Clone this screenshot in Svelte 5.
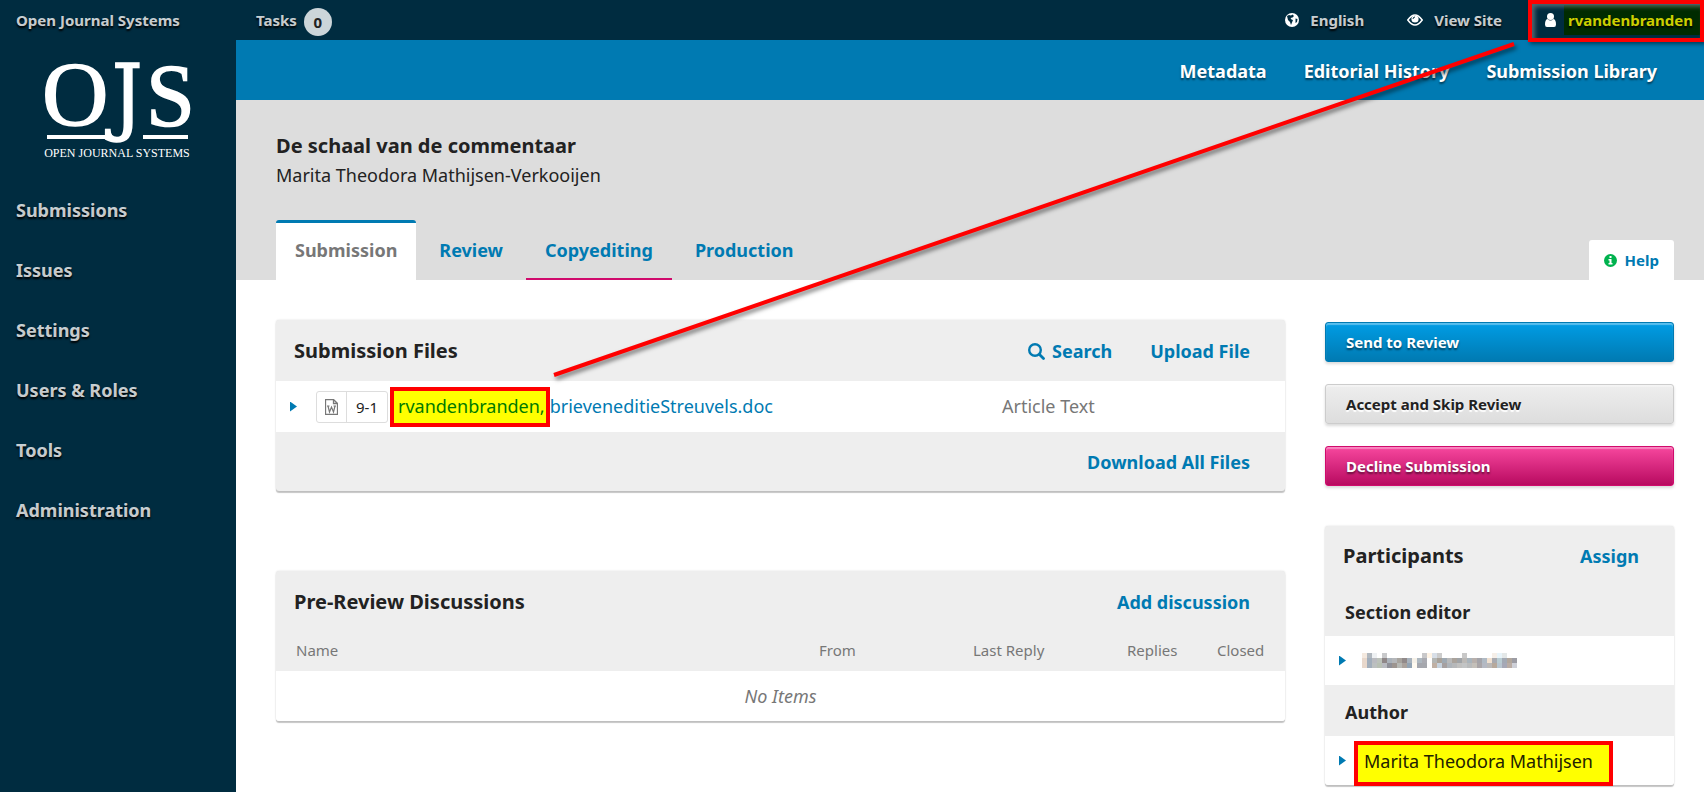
<script lang="ts">
  const navItems = ["Submissions", "Issues", "Settings", "Users & Roles", "Tools", "Administration"];
  const actions = ["Metadata", "Editorial History", "Submission Library"];

  const tabs = [
    { label: "Submission", state: "active" },
    { label: "Review", state: "" },
    { label: "Copyediting", state: "initiated" },
    { label: "Production", state: "" },
  ];

  const decisions = [
    { label: "Send to Review", kind: "primary" },
    { label: "Accept and Skip Review", kind: "plain" },
    { label: "Decline Submission", kind: "warn" },
  ];

  const columns = ["Name", "From", "Last Reply", "Replies", "Closed"];

  // cell colours of the redacted name
  const mosaic = [
    "f4e9df b1b8bf eef1f3 ffffff c8c9cb ffffff ffffff ffffff ffffff ffffff ffffff ffffff c8c8ca fff4e6 d8dfe8 cccccc ffffff ffffff ffffff ffffff c8c8c8 ffffff ffffff ffffff ffffff ffffff f6efe8 e8f4fa e4e8e8 ffffff ffffff",
    "e8d8cc a2aebb babbc0 bcc2bb 8f8788 aab2ba b5b7ba a8a49e 918a8a a8b2bc f6f1e8 aeb8c0 aaabb2 ffffff b4b6b4 a9a29a 9fa9b2 b9b9b9 aaa39c a0a4a8 bcb9b6 a9b4bc b8b0ac a4a4aa b0bac4 f0e0d0 a9aab0 b9ccd2 a2a9b4 b0a69c 9c9ca4",
    "e8d8cc a2aebb bcc0c0 b8c0b4 b8bac0 8f9098 9d9590 b6b8b4 aaa29c 93a4b4 fffaf0 a5a7ae a6a8ae ffffff c0b0a4 c6d2de a6a0a0 aeb4ba b6b8ba c0c0bf c2c4c5 b9bbbc c4c0ba a9a5a8 b5b9c3 bbb9b8 b7a99c b8c6d0 a6a8b6 b9aca4 ced0d8",
  ].map((row) => row.split(" "));
</script>

<div class="app">
  <aside class="sidebar">
    <a class="context" href="#context">Open Journal Systems</a>
    <a class="logo" href="#home" aria-label="Open Journal Systems">
      <svg width="148" height="104" viewBox="0 0 148 104" fill="#fff">
        <g stroke="#fff" stroke-width="1.500">
          <text class="serif" x="0" y="66" font-size="92">O</text>
          <text class="condensed" x="70" y="65" font-size="84">J</text>
          <text class="serif" x="104" y="66" font-size="88">S</text>
        </g>
        <rect x="5" y="76" width="65" height="4" />
        <rect x="101" y="76" width="45" height="4" />
        <text class="serif" x="75" y="98" font-size="12" text-anchor="middle">OPEN JOURNAL SYSTEMS</text>
      </svg>
    </a>
    <nav class="nav">
      {#each navItems as item}
        <a href="#nav">{item}</a>
      {/each}
    </nav>
  </aside>

  <div class="main">
    <header class="topbar">
      <a class="tasks" href="#tasks">Tasks <span class="count">0</span></a>
      <div class="user-nav">
        <a href="#language">
          <svg width="14" height="14" viewBox="0 0 14 14">
            <circle cx="7" cy="7" r="7" fill="#fff" />
            <path d="M2 3 4 2l2 .5L7.500 1.500 9 3 7.500 4.500 5.500 5 6.500 6.500 8 7 7 9.500 6 12 5 9 3 7ZM10.500 5.500l2 .5-.5 3-1.500 1Z" fill="#002c40" />
          </svg>
          English
        </a>
        <a href="#site">
          <svg width="16" height="12" viewBox="0 0 16 12">
            <path d="M.8 6Q8-4 15.200 6 8 16 .8 6Z" fill="none" stroke="#fff" stroke-width="1.500" />
            <circle cx="8" cy="5" r="3.600" fill="#fff" />
            <path d="M6 5a2 2 0 0 1 2-2" fill="none" stroke="#002c40" />
          </svg>
          View Site
        </a>
        <a class="user" href="#profile">
          <svg width="11" height="14" viewBox="0 0 11 14" fill="#fff">
            <circle cx="5.500" cy="3.500" r="3.500" />
            <path d="M2.500 6Q0 6.500 0 11.500 0 14 2 14h7q2 0 2-2.500Q11 6.500 8.500 6 5.500 9 2.500 6Z" />
          </svg>
          <span class="marked">rvandenbranden</span>
        </a>
      </div>
    </header>

    <div class="actions">
      {#each actions as action}
        <a href="#action">{action}</a>
      {/each}
    </div>

    <section class="heading">
      <h1>De schaal van de commentaar</h1>
      <div class="author">Marita Theodora Mathijsen-Verkooijen</div>
      <div class="tab-row">
        <nav class="tabs">
          {#each tabs as tab}
            <a class={tab.state} href="#stage">{tab.label}</a>
          {/each}
        </nav>
        <a class="help" href="#help">
          <svg width="13" height="13" viewBox="0 0 13 13">
            <circle cx="6.500" cy="6.500" r="6.500" fill="#00b24e" />
            <path d="M5.500 2h2v2h-2ZM4.500 5h3v4h1v1.500h-4V9h1V6.500h-1Z" fill="#fff" />
          </svg>
          Help
        </a>
      </div>
    </section>

    <main class="content">
      <div class="column">
        <section class="panel">
          <div class="panel-head">
            <h2>Submission Files</h2>
            <div class="panel-actions">
              <button type="button">
                <svg width="17" height="17" viewBox="0 0 17 17" fill="none" stroke="#007ab2">
                  <circle cx="7" cy="7" r="5.800" stroke-width="2.400" />
                  <path d="m11.500 11.500 4 4" stroke-width="2.800" stroke-linecap="round" />
                </svg>
                Search
              </button>
              <button type="button">Upload File</button>
            </div>
          </div>
          <div class="file">
            <button class="toggle" type="button" aria-label="Settings"></button>
            <span class="badge">
              <span class="type">
                <svg width="13" height="16" viewBox="0 0 13 16" fill="none" stroke="#777">
                  <path d="M.5.5h8l4 4v11H.5ZM8.500.5v4h4" stroke-width="1.300" />
                  <path d="m3 7 1.500 6L6.500 8l2 5L10 7M2 7h2.500M8.500 7H11" stroke-width="1.200" />
                </svg>
              </span>
              <span class="id">9-1</span>
            </span>
            <a class="file-name" href="#file"><span class="boxed">rvandenbranden,</span><span class="rest">brieveneditieStreuvels.doc</span></a>
            <span class="genre">Article Text</span>
          </div>
          <div class="panel-foot">
            <button type="button">Download All Files</button>
          </div>
        </section>

        <section class="panel">
          <div class="panel-head">
            <h2>Pre-Review Discussions</h2>
            <div class="panel-actions">
              <button type="button">Add discussion</button>
            </div>
          </div>
          <table>
            <thead>
              <tr>
                {#each columns as column}
                  <th scope="col">{column}</th>
                {/each}
              </tr>
            </thead>
            <tbody>
              <tr><td colspan="5">No Items</td></tr>
            </tbody>
          </table>
        </section>
      </div>

      <aside class="side">
        <div class="decisions">
          {#each decisions as decision}
            <button class={decision.kind} type="button">{decision.label}</button>
          {/each}
        </div>

        <section class="panel participants">
          <div class="panel-head">
            <h2>Participants</h2>
            <div class="panel-actions">
              <button type="button">Assign</button>
            </div>
          </div>
          <h3>Section editor</h3>
          <div class="person">
            <button class="toggle" type="button" aria-label="Settings"></button>
            <svg class="mosaic" width="155" height="15" viewBox="0 0 155 15" shape-rendering="crispEdges">
              {#each mosaic as row, y}
                {#each row as color, x}
                  <rect x={x * 5} y={y * 5} width="5" height="5" fill={`#${color}`} />
                {/each}
              {/each}
            </svg>
          </div>
          <h3>Author</h3>
          <div class="person">
            <button class="toggle" type="button" aria-label="Settings"></button>
            <span class="boxed wide">Marita Theodora Mathijsen</span>
          </div>
        </section>
      </aside>
    </main>
  </div>

  <!-- connects the uploader's name in the file list to the account menu -->
  <svg class="connector" width="976" height="352" viewBox="0 0 976 352" aria-hidden="true">
    <path d="M4 336 964 5" stroke="#f00" stroke-width="4" />
  </svg>
</div>

<style>
  :global(body) {
    background: #fff;
  }

  .app {
    position: relative;
    display: flex;
    min-height: 100vh;
    overflow: hidden;
    font-family: "Noto Sans", "Open Sans", sans-serif;
    font-size: 18px;
    line-height: 30px;
    color: #222;
  }

  a {
    color: #007ab2;
    text-decoration: none;
  }
  button {
    padding: 0;
    border: 0;
    background: none;
    font: inherit;
    font-weight: 700;
    color: #007ab2;
    cursor: pointer;
  }
  svg {
    flex-shrink: 0;
  }

  .sidebar {
    width: 236px;
    flex-shrink: 0;
    background: #002c40;
  }
  .sidebar a,
  .topbar a {
    color: rgba(255, 255, 255, 0.8);
    font-weight: 700;
    text-shadow: 0 2px 2px #000;
  }
  .context {
    display: block;
    padding: 0 16px;
    font-size: 15px;
    line-height: 40px;
  }
  .logo {
    display: block;
    height: 104px;
    margin: 19px 0 17px 42px;
  }
  .logo svg {
    overflow: visible;
  }
  .logo text {
    font-weight: 400;
    text-shadow: none;
  }
  .serif {
    font-family: "Liberation Serif", serif;
  }
  .condensed {
    font-family: "DejaVu Serif Condensed", "DejaVu Serif", serif;
  }
  .nav a {
    display: block;
    padding: 0 16px;
    line-height: 60px;
  }

  .main {
    flex: 1;
    min-width: 0;
  }
  .topbar {
    display: flex;
    justify-content: space-between;
    height: 40px;
    padding: 0 4px 0 20px;
    background: #002c40;
    font-size: 15px;
    line-height: 40px;
  }
  .tasks {
    display: flex;
    align-items: center;
    gap: 7px;
  }
  .count {
    width: 28px;
    margin-top: 4px;
    border-radius: 50%;
    background: #ccd5d9;
    color: #222;
    line-height: 28px;
    text-align: center;
    text-shadow: none;
  }
  .user-nav {
    display: flex;
    gap: 43px;
  }
  .user-nav a {
    display: flex;
    align-items: center;
    gap: 11px;
  }
  .user-nav .user {
    position: relative;
    gap: 8px;
  }
  .user::after {
    content: "";
    position: absolute;
    top: 0;
    right: -4px;
    left: -17px;
    height: 34px;
    border: 4px solid #f00;
    box-shadow:
      2px 2px 4px rgba(0, 0, 0, 0.5),
      inset 3px 3px 4px rgba(160, 160, 160, 0.5);
  }
  .marked {
    padding: 0 7px 0 4px;
    background: #002b00;
    color: #cccf00;
    line-height: 30px;
  }

  .actions {
    display: flex;
    justify-content: flex-end;
    gap: 37px;
    padding: 2px 47px 0;
    background: #007ab2;
    line-height: 58px;
  }
  .actions a {
    color: #fff;
    font-weight: 700;
    text-shadow: 0 2px 2px rgba(0, 0, 0, 0.5);
  }

  .heading {
    padding: 31px 30px 0 40px;
    background: #ddd;
  }
  h1,
  h2,
  h3 {
    margin: 0;
    font-size: 20px;
    font-weight: 700;
    line-height: 30px;
  }
  .author {
    line-height: 28px;
  }
  .tab-row {
    display: flex;
    justify-content: space-between;
    align-items: flex-end;
    margin-top: 31px;
  }
  .tabs {
    display: flex;
    gap: 4px;
  }
  .tabs a {
    height: 60px;
    box-sizing: border-box;
    padding: 0 19px;
    font-weight: 700;
    line-height: 60px;
  }
  .tabs .active {
    border-top: 3px solid #007ab2;
    border-radius: 3px 3px 0 0;
    background: #fff;
    color: #777;
    line-height: 54px;
  }
  .tabs .initiated {
    border-bottom: 2px solid #d00a6c;
  }
  .help {
    display: flex;
    align-items: center;
    gap: 8px;
    padding: 0 15px;
    border-radius: 3px 3px 0 0;
    background: #fff;
    font-size: 15px;
    font-weight: 700;
    line-height: 40px;
  }

  .content {
    display: grid;
    grid-template-columns: minmax(0, 1fr) 349px;
    gap: 40px;
    padding: 40px 30px 0 40px;
  }
  .column {
    display: grid;
    align-content: start;
    gap: 80px;
  }

  .panel {
    border-radius: 3px;
    background: #eee;
    box-shadow:
      0 2px 1px rgba(0, 0, 0, 0.22),
      0 0 2px rgba(0, 0, 0, 0.15);
  }
  .panel-head {
    display: flex;
    justify-content: space-between;
    padding: 16px 35px 15px 18px;
  }
  .panel-actions {
    display: flex;
    gap: 38px;
  }
  .panel-actions button {
    display: flex;
    align-items: center;
    gap: 7px;
  }

  .toggle {
    width: 7px;
    height: 10px;
    flex-shrink: 0;
    background: #007ab2;
    clip-path: polygon(0 0, 100% 50%, 0 100%);
  }
  .file {
    display: flex;
    align-items: center;
    height: 51px;
    padding-left: 14px;
    background: #fff;
  }
  .badge {
    display: flex;
    margin-left: 19px;
    border: 1px solid #ddd;
    border-radius: 3px;
    font-size: 15px;
  }
  .type {
    display: flex;
    align-items: center;
    padding: 0 8px;
    border-right: 1px solid #ddd;
  }
  .id {
    padding: 0 9px;
  }
  .boxed {
    padding: 0 1px 2px 4px;
    border: 4px solid #f00;
    background: #ff0;
    color: #007a00;
    line-height: 30px;
  }
  .rest,
  .genre {
    padding-bottom: 2px;
  }
  .file-name {
    display: flex;
    flex: 1;
    align-items: center;
    margin-left: 2px;
  }
  .genre {
    width: 283px;
    color: #777;
  }
  .panel-foot {
    display: flex;
    justify-content: flex-end;
    padding: 15px 35px 14px;
  }

  table {
    width: 100%;
    border-collapse: collapse;
    table-layout: fixed;
  }
  th {
    padding: 0 0 2px;
    color: #777;
    font-size: 15px;
    font-weight: 400;
    line-height: 37px;
    text-align: left;
  }
  th:first-child {
    padding-left: 20px;
  }
  th:nth-child(2),
  th:nth-child(3) {
    width: 154px;
  }
  th:nth-child(4) {
    width: 90px;
  }
  th:nth-child(5) {
    width: 68px;
  }
  td {
    padding: 10px;
    border-radius: 0 0 3px 3px;
    background: #fff;
    color: #777;
    font-style: italic;
    text-align: center;
  }

  .decisions {
    display: grid;
    gap: 22px;
    margin: 2px 0 40px;
  }
  .decisions button {
    padding: 0 20px;
    border: 1px solid #007ab2;
    border-radius: 3px;
    font-size: 15px;
    line-height: 38px;
    text-align: left;
    box-shadow:
      0 2px 3px rgba(0, 0, 0, 0.15),
      inset 0 2px 1px rgba(255, 255, 255, 0.35);
  }
  .decisions .primary {
    background: linear-gradient(#009de5, #007ab2);
    color: #fff;
    text-shadow: 0 2px 2px rgba(0, 0, 0, 0.5);
  }
  .decisions .plain {
    border-color: #ccc;
    background: linear-gradient(#eee, #ddd);
    color: #222;
    text-shadow: 0 2px 1px #fff;
  }
  .decisions .warn {
    border-color: #d00a6c;
    background: linear-gradient(#f7479e, #b80a60);
    color: #fff;
    text-shadow: 0 2px 2px rgba(0, 0, 0, 0.5);
  }

  h3 {
    padding: 12px 20px 9px;
    font-size: 18px;
  }
  .participants .panel-head {
    padding: 15px 35px 14px 18px;
  }
  .person {
    display: flex;
    align-items: center;
    height: 49px;
    padding-left: 14px;
    background: #fff;
  }
  .person:last-child {
    border-radius: 0 0 3px 3px;
  }
  .mosaic {
    margin-left: 16px;
  }
  .boxed.wide {
    margin: 6px 0 0 8px;
    padding: 0 16px 4px 6px;
    color: #222200;
    line-height: 33px;
  }

  .connector {
    position: absolute;
    top: 39px;
    right: 178px;
    filter: drop-shadow(2px 3px 2px rgba(0, 0, 0, 0.5));
    pointer-events: none;
  }
</style>
